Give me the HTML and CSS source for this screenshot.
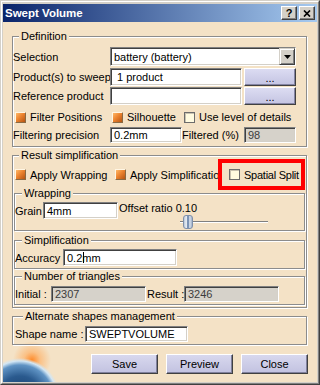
FILE: index.html
```html
<!DOCTYPE html>
<html lang="en">
<head>
<meta charset="utf-8">
<title>Swept Volume</title>
<link rel="stylesheet" href="styles.css">
</head>
<body>
<div class="window">
  <div class="frame">
    <div class="titlebar">
      <span class="title">Swept Volume</span>
      <div class="tbtns">
        <span class="tbtn">?</span>
        <span class="tbtn"><svg width="8" height="7" viewBox="0 0 8 7"><path d="M1 0.5l6 6M7 0.5l-6 6" stroke="#000" stroke-width="1.7"/></svg></span>
      </div>
    </div>
    <div class="client">
      <section class="group g-def">
        <span class="legend lg-a">Definition</span>
        <div class="row r-sel">
          <span class="lbl w97">Selection</span>
          <div class="combo">
            <span class="combo-text">battery (battery)</span>
            <span class="combo-btn"><svg width="7" height="4" viewBox="0 0 7 4"><path d="M0 0h7L3.5 4z" fill="#000"/></svg></span>
          </div>
        </div>
        <div class="row r-prod">
          <span class="lbl w97">Product(s) to sweep</span>
          <span class="edit w132 pad6">1 product</span>
          <span class="lbtn">...</span>
        </div>
        <div class="row r-ref">
          <span class="lbl w97">Reference product</span>
          <span class="edit w132"></span>
          <span class="lbtn">...</span>
        </div>
        <div class="row r-chk">
          <span class="chk w97"><span class="cb on"></span>Filter Positions</span>
          <span class="chk w72"><span class="cb on"></span>Silhouette</span>
          <span class="chk"><span class="cb"></span>Use level of details</span>
        </div>
        <div class="row r-filt">
          <span class="lbl w97">Filtering precision</span>
          <span class="edit w72">0.2mm</span>
          <span class="lbl w62">Filtered (%)</span>
          <span class="edit ro w52">98</span>
        </div>
      </section>

      <section class="group g-res">
        <span class="legend lg-a">Result simplification</span>
        <div class="row r-opts">
          <span class="chk w100"><span class="cb on"></span>Apply Wrapping</span>
          <span class="chk w103"><span class="cb on"></span>Apply Simplification</span>
          <span class="chk spatial"><span class="cb"></span><span class="sp-text">Spatial Split</span></span>
        </div>

        <section class="group sub g-wrap">
          <span class="legend lg-b">Wrapping</span>
          <div class="row r-grain">
            <span class="lbl w28 h17">Grain</span>
            <span class="edit w75 h17">4mm</span>
            <div class="offset">
              <span class="offset-text">Offset ratio 0.10</span>
              <div class="slider"><span class="thumb"></span></div>
            </div>
          </div>
        </section>

        <section class="group sub g-simp">
          <span class="legend lg-b">Simplification</span>
          <div class="row r-acc">
            <span class="lbl w48">Accuracy</span>
            <span class="edit w114">0.2<span class="caret"></span>mm</span>
          </div>
        </section>

        <section class="group sub g-tri">
          <span class="legend lg-b">Number of triangles</span>
          <div class="row r-tri">
            <span class="lbl w36">Initial :</span>
            <span class="edit ro w95">2307</span>
            <span class="lbl w38 pl1">Result :</span>
            <span class="edit ro w95">3246</span>
          </div>
        </section>
      </section>

      <section class="group g-alt">
        <span class="legend lg-c">Alternate shapes management</span>
        <div class="row r-shape">
          <span class="lbl w70">Shape name :</span>
          <span class="edit w103">SWEPTVOLUME</span>
        </div>
      </section>

      <div class="actions">
        <span class="pbtn">Save</span>
        <span class="pbtn">Preview</span>
        <span class="pbtn">Close</span>
      </div>
    </div>
  </div>
</div>
</body>
</html>
```

FILE: styles.css
```css
:root { --bg: #f4e2c6; }
* { box-sizing: border-box; }
html, body { margin: 0; padding: 0; }
body {
  width: 320px; height: 385px; overflow: hidden;
  background: #d4d0c8;
  font-family: "Liberation Sans", Arial, sans-serif;
  font-size: 11px; color: #000;
}
.window {
  width: 320px; height: 385px;
  border: 1px solid; border-color: #d4d0c8 #404040 #404040 #d4d0c8;
}
.frame {
  height: 100%;
  display: flex; flex-direction: column;
  border: 1px solid; border-color: #fff #808080 #808080 #fff;
  padding: 2px 1px 1px;
  background: #d4d0c8;
}
.titlebar {
  flex: none; height: 18px;
  display: flex; align-items: center; justify-content: space-between;
  padding: 0 2px;
  background: linear-gradient(to right, #0a246a, #a6caf0);
}
.title { color: #fff; font-weight: bold; font-size: 11.5px; white-space: nowrap; }
.tbtns { display: flex; gap: 2px; }
.tbtn {
  width: 16px; height: 14px;
  display: flex; align-items: center; justify-content: center;
  background: #d4d0c8;
  border: 1px solid; border-color: #fff #404040 #404040 #fff;
  box-shadow: inset -1px -1px 0 #808080;
  font-weight: bold; font-size: 11px; line-height: 1;
}
.client {
  flex: 1;
  padding: 14px 10px 0 9px;
  background:
    radial-gradient(circle at 17px 376px, #163763 0, #2a5a8e 22px, #5f93c4 33px, #d2e6f4 37px, rgba(244,226,198,0) 40px),
    radial-gradient(circle at 29px 338px, rgba(255,135,35,.95) 0, rgba(255,170,90,.6) 8px, rgba(244,226,198,0) 19px),
    var(--bg);
}

/* group boxes */
.group {
  position: relative;
  border: 1px solid #8c8c8c;
  box-shadow: 1px 1px 0 #fff, inset 1px 1px 0 #fff;
}
.legend {
  position: absolute; top: -7px;
  line-height: 13px; padding: 0 2px;
  background: var(--bg); white-space: nowrap;
}
.lg-a { left: 6px; }
.lg-b { left: 7px; }
.lg-c { left: 10px; }
.sub { margin-left: 1px; margin-right: 1px; }

.g-def { padding: 10px 0 3px 0; }
.g-res { margin-top: 8px; padding: 3px 0 2px 0; }
.g-wrap { margin-top: 3px; padding: 8px 0 1px 0; }
.g-simp { margin-top: 9px; padding: 8px 0 2px 0; }
.g-tri { margin-top: 7px; padding: 9px 0 2px 0; }
.g-alt { margin-top: 8px; padding: 9px 0 2px 2px; }

/* rows */
.row { display: flex; align-items: center; }
.r-sel { height: 19px; }
.r-prod { height: 18px; margin-top: 2px; }
.r-ref { height: 18px; margin-top: 1px; }
.r-chk { height: 18px; margin-top: 3px; padding-left: 2px; }
.r-filt { height: 16px; margin-top: 1px; }
.r-opts { height: 31px; padding-left: 2px; }
.r-grain { align-items: flex-start; }
.r-acc { height: 17px; }
.r-tri { height: 16px; }
.r-shape { height: 16px; }

.lbl { flex: none; white-space: nowrap; }
.h17 { height: 17px; }
.lbl.h17 { display: flex; align-items: center; }
.pl1 { padding-left: 1px; }

.w28 { width: 28px; } .w36 { width: 36px; } .w38 { width: 38px; }
.w48 { width: 48px; } .w52 { width: 52px; } .w62 { width: 62px; }
.w70 { width: 70px; } .w72 { width: 72px; } .w75 { width: 75px; }
.w95 { width: 95px; } .w97 { width: 97px; } .w100 { width: 100px; }
.w103 { width: 103px; } .w114 { width: 114px; } .w132 { width: 132px; }

/* edit fields */
.edit {
  flex: none; height: 100%;
  display: flex; align-items: center;
  padding-left: 3px;
  background: #fff;
  border: 1px solid; border-color: #808080 #fff #fff #808080;
  box-shadow: inset 1px 1px 0 #404040, inset -1px -1px 0 #d4d0c8;
  white-space: nowrap; overflow: hidden;
}
.edit.h17 { height: 17px; }
.edit.pad6 { padding-left: 6px; }
.edit.ro { background: #d6d2ca; color: #3c3c3c; }
.caret {
  display: inline-block; width: 1px; height: 11px;
  background: #000; margin: 0 -2px 0 1px;
}

/* combo */
.combo {
  flex: none; width: 186px; height: 100%;
  display: flex;
  background: #fff;
  border: 1px solid; border-color: #808080 #fff #fff #808080;
  box-shadow: inset 1px 1px 0 #404040, inset -1px -1px 0 #d4d0c8;
}
.combo-text { flex: 1; display: flex; align-items: center; padding-left: 3px; white-space: nowrap; }
.combo-btn {
  width: 16px;
  display: flex; align-items: center; justify-content: center;
  background: #d4d0c8;
  border: 1px solid; border-color: #d4d0c8 #404040 #404040 #d4d0c8;
  box-shadow: inset 1px 1px 0 #fff, inset -1px -1px 0 #808080;
}

/* lavender buttons */
.lbtn {
  flex: none; width: 52px; height: 100%; margin-left: 2px;
  display: flex; align-items: center; justify-content: center;
  background: linear-gradient(#dcdcf2, #c4c4e2);
  border: 1px solid; border-color: #fff #404040 #404040 #fff;
  box-shadow: inset -1px -1px 0 #8484a4;
  padding-top: 2px;
}

/* checkboxes */
.chk { flex: none; display: flex; align-items: center; white-space: nowrap; }
.cb {
  flex: none; width: 11px; height: 11px; margin-right: 4px;
  background: #fffbe0;
  border: 1px solid #6c6c6c;
  box-shadow: inset 1px 1px 0 #c8c2b0;
}
.cb.on {
  border-color: #fff6e4 #8a6a44 #8a6a44 #fff6e4;
  box-shadow: none;
  background: linear-gradient(135deg, #ffb868 0, #ec8430 45%, #b65412 100%);
}
.spatial {
  width: 87px; height: 31px;
  border: 4px solid #ff0000;
  padding-left: 7px;
  background: var(--bg);
}
.sp-text { letter-spacing: -0.25px; }

/* wrapping offset + slider */
.offset { display: flex; flex-direction: column; }
.offset-text { height: 12px; line-height: 12px; padding-left: 1px; white-space: nowrap; }
.slider {
  width: 88px; height: 15px; margin-left: 62px;
  display: flex; align-items: flex-start;
  background:
    linear-gradient(#808080, #808080) 0 7px / 100% 1px no-repeat,
    linear-gradient(#ffffff, #ffffff) 0 8px / 100% 1px no-repeat;
}
.thumb {
  width: 10px; height: 14px; margin: 1px 0 0 3px;
  border: 1px solid #7f90aa; border-radius: 3px;
  background: linear-gradient(to right, #b8c6d8, #eef2f7 30%, #7a92b4 44%, #24375a 50%, #7a92b4 56%, #dde4ee 72%, #9fb0c8);
}

/* action buttons */
.actions {
  display: flex; justify-content: flex-end; gap: 8px;
  margin: 9px -1px 0 0;
}
.pbtn {
  width: 67px; height: 20px;
  display: flex; align-items: center; justify-content: center;
  background: linear-gradient(#d8d8ee, #c2c2e0);
  border: 1px solid; border-color: #fff #404040 #404040 #fff;
  box-shadow: inset -1px -1px 0 #80809c;
}
```
